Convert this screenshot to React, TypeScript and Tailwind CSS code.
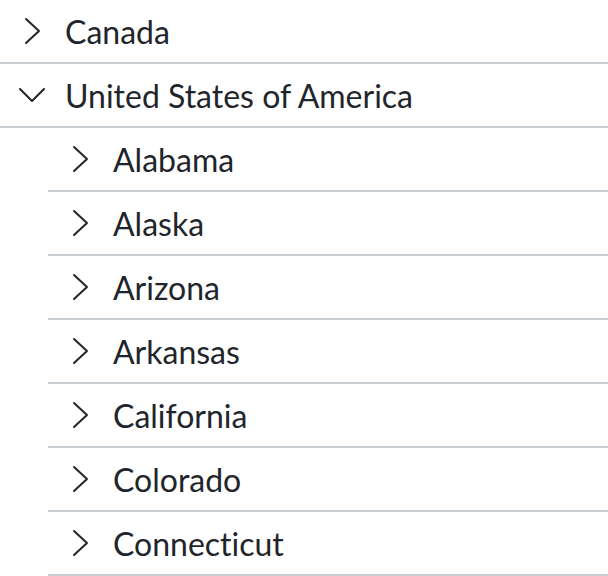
import React from "react";

const C = "#1f262b";

const Right = () => (
  <svg width="18" height="28" viewBox="0 0 18 28" fill="none" stroke={C} strokeWidth="2" strokeLinecap="round" strokeLinejoin="round">
    <polyline points="2,2 15,14 2,26" />
  </svg>
);
const Down = () => (
  <svg width="28" height="18" viewBox="0 0 28 18" fill="none" stroke={C} strokeWidth="2" strokeLinecap="round" strokeLinejoin="round">
    <polyline points="2,3 14,15 26,3" />
  </svg>
);

function Row({ label, open, indent }: { label: string; open?: boolean; indent?: boolean }) {
  return (
    <div className={`flex h-[64px] items-center border-b-2 border-[#c7cdd1] ${indent ? "ml-[48px]" : ""}`}>
      <div className="flex w-[65px] shrink-0 items-center justify-start pl-[18px]">
        {open ? <Down /> : <div className="pl-[6px]"><Right /></div>}
      </div>
      <span
        className="pt-[2px] text-[32px] leading-none text-[#1f262b] [font-variant-ligatures:none]"
        style={{ fontFamily: "Lato, 'Noto Sans', sans-serif" }}
      >
        {label}
      </span>
    </div>
  );
}

export default function App() {
  const states = ["Alabama", "Alaska", "Arizona", "Arkansas", "California", "Colorado", "Connecticut"];
  return (
    <div className="w-[608px] h-[576px] overflow-hidden bg-white">
      <Row label="Canada" />
      <Row label="United States of America" open />
      {states.map((s) => (
        <Row key={s} label={s} indent />
      ))}
    </div>
  );
}
